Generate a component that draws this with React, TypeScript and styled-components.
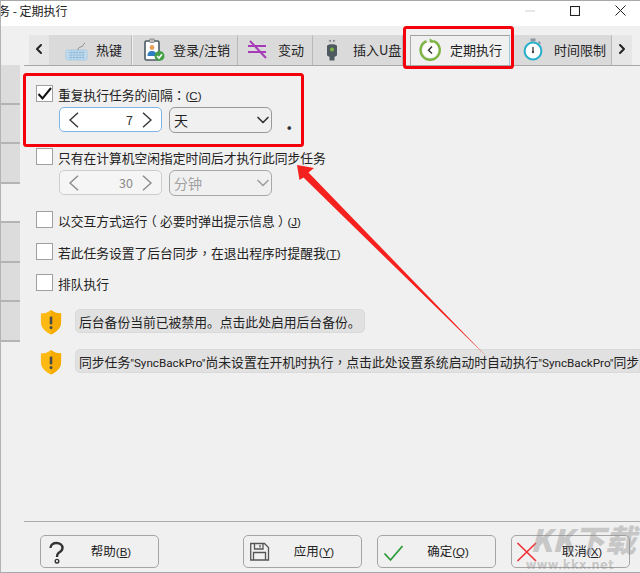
import React from "react";
import styled, { createGlobalStyle } from "styled-components";
import { ChevronLeft, ChevronRight, ChevronDown } from "lucide-react";

const Global = createGlobalStyle`
  html, body { margin: 0; padding: 0; background: #f0f0f0; }
  * { box-sizing: border-box; }
  body { font-family: "Noto Sans CJK SC", "Liberation Sans", sans-serif; color: #222; }
`;

const Window = styled.div`
  position: relative;
  width: 640px;
  height: 573px;
  overflow: hidden;
  display: flex;
  flex-direction: column;
  background: #f0f0f0;
  border-top: 1px solid #a8a8a8;
  border-left: 1px solid #b4b4b4;
  border-bottom: 1px solid #a8a8a8;
`;

const TitleBar = styled.header`
  flex: none;
  height: 25px;
  background: #fff;
  display: flex;
  align-items: center;
  justify-content: space-between;
  padding-right: 14px;
`;

const TitleText = styled.span`
  font-size: 12px;
  margin-left: -3px;
  margin-top: -6px;
  white-space: pre;
`;

const WinControls = styled.div`
  display: flex;
  align-items: center;
  gap: 35px;
  margin-top: -6px;
`;

const Body = styled.div`
  flex: 1;
  min-height: 0;
  display: flex;
`;

const SideRail = styled.aside`
  flex: none;
  width: 19px;
  padding-top: 39px;
  display: flex;
  flex-direction: column;
`;

const SideRow = styled.div<{ $blank?: boolean }>`
  height: 39.5px;
  background: ${(p) => (p.$blank ? "transparent" : "#dcdcdc")};
  border-bottom: 2px solid #b4b4b4;
`;

const Main = styled.main`
  flex: 1;
  min-width: 0;
  margin-left: 4px;
  display: flex;
  flex-direction: column;
`;

const TabStrip = styled.nav`
  flex: none;
  margin-top: 9px;
  height: 31px;
  padding-left: 5px;
  display: flex;
  border-bottom: 1px solid #a8a8a8;
`;

const ScrollBtn = styled.div<{ $right?: boolean }>`
  flex: none;
  width: ${(p) => (p.$right ? 20 : 27)}px;
  height: 30px;
  padding-right: ${(p) => (p.$right ? 0 : "7px")};
  padding-bottom: 2px;
  background: ${(p) => (p.$right ? "#e6e6e6" : "linear-gradient(90deg, #e6e6e6 20px, #dadada 20px)")};
  display: flex;
  align-items: center;
  justify-content: center;
  color: #222;
`;

const Tab = styled.div<{ $w: number; $active?: boolean; $ml?: number }>`
  flex: none;
  width: ${(p) => p.$w}px;
  height: 30px;
  margin-left: ${(p) => p.$ml ?? 0}px;
  padding: 0 0 2px 8px;
  display: flex;
  align-items: center;
  gap: 7px;
  font-size: 13px;
  white-space: nowrap;
  background: ${(p) => (p.$active ? "#f0f0f0" : "#dadada")};
  border-right: 1px solid ${(p) => (p.$active ? "#9fc6dc" : "#b8b8b8")};
  border-left: 1px solid ${(p) => (p.$active ? "#a8a8a8" : "transparent")};
  border-top: 1px solid ${(p) => (p.$active ? "#a0a0a0" : "#dadada")};
`;

const TabIcon = styled.svg`
  flex: none;
  width: 24px;
  height: 24px;
`;

const Panel = styled.section`
  flex: 1;
  min-height: 0;
  padding: 19px 0 0 12px;
  display: flex;
  flex-direction: column;
  gap: 14.5px;
`;

const Group = styled.div`
  display: flex;
  flex-direction: column;
  gap: 5px;
`;

const CheckRow = styled.label`
  height: 17px;
  display: flex;
  align-items: center;
  gap: 5px;
  font-size: 12.75px;
  white-space: nowrap;
`;

const LabelText = styled.span`
  padding-top: 2px;
`;

const Box = styled.span`
  flex: none;
  width: 17px;
  height: 17px;
  background: #fff;
  border: 1px solid #a0a0a0;
  display: flex;
  align-items: center;
  justify-content: center;
`;

const Punct = styled.span`
  font-family: "Noto Sans CJK TC", sans-serif;
`;

const Paren = styled.span<{ $dir: number }>`
  display: inline-block;
  transform: translateX(${(p) => p.$dir * 0.25}em);
`;

const Access = styled.span`
  font-family: "Liberation Sans", sans-serif;
  font-size: 11.5px;
`;

const Latin = styled.span`
  font-family: Roboto, sans-serif;
  font-size: 11.7px;
`;

const FieldRow = styled.div`
  height: 26.5px;
  margin-left: 23px;
  display: flex;
  align-items: flex-start;
  gap: 7px;
`;

const Spinner = styled.div<{ $off?: boolean }>`
  width: 103px;
  height: 25px;
  padding: 0 9px;
  display: flex;
  align-items: center;
  background: ${(p) => (p.$off ? "#f5f5f5" : "#fff")};
  border: 1px solid ${(p) => (p.$off ? "#cdcdcd" : "#7db4e6")};
  border-radius: 5px;
  color: ${(p) => (p.$off ? "#8a8a8a" : "#333")};
`;

const SpinValue = styled.span`
  flex: 1;
  text-align: right;
  padding-right: 9px;
  font-size: 12.5px;
`;

const Select = styled.div<{ $off?: boolean }>`
  width: 103px;
  height: 26px;
  padding: 0 0 0 4px;
  display: flex;
  align-items: center;
  justify-content: space-between;
  font-size: 14px;
  background: #f0f0f0;
  border: 1px solid ${(p) => (p.$off ? "#a8a8a8" : "#989898")};
  border-radius: 6px;
  color: ${(p) => (p.$off ? "#a0a0a0" : "#222")};
`;

const Caret = styled(ChevronDown)`
  margin-right: -2px;
`;

const Dot = styled.span`
  margin-left: 7px;
  margin-top: 2px;
  font-size: 20px;
  font-weight: 700;
  line-height: 26px;
  color: #333;
`;

const Notice = styled.div<{ $mt: number }>`
  display: flex;
  align-items: flex-start;
  margin-top: ${(p) => p.$mt}px;
  margin-left: 4px;
  gap: 13px;
`;

const Shield = styled.svg`
  flex: none;
  width: 22px;
  height: 26px;
`;

const Pill = styled.div<{ $wide?: boolean }>`
  height: 24px;
  padding: 0 3px 0 3px;
  display: flex;
  align-items: center;
  font-size: 12.8px;
  white-space: pre;
  background: #e1e1e1;
  border: 1px solid #dadada;
  border-radius: ${(p) => (p.$wide ? "5px 0 0 5px" : "5px")};
  ${(p) => (p.$wide ? "flex: 1; min-width: 0; overflow: hidden;" : "")}
`;

const Footer = styled.footer`
  flex: none;
  height: 51px;
  padding: 13px 10px 0 16px;
  border-top: 1px solid #ababab;
  display: flex;
  gap: 15px;
`;

const Btn = styled.button<{ $mr?: number }>`
  flex: none;
  width: 119px;
  height: 33px;
  margin-right: ${(p) => p.$mr ?? 0}px;
  padding: 0 5px 0 6px;
  display: flex;
  align-items: center;
  background: transparent;
  border: 1px solid #a5a5a5;
  border-radius: 5px;
  font-family: inherit;
  font-size: 12.5px;
  color: #222;
`;

const BtnIcon = styled.svg`
  flex: none;
  width: 22px;
  height: 24px;
  overflow: visible;
`;

const BtnLabel = styled.span`
  flex: 1;
  text-align: center;
  white-space: nowrap;
  padding-bottom: 2px;
`;

const Annotation = styled.svg`
  position: absolute;
  left: -1px;
  top: -1px;
  width: 640px;
  height: 573px;
  pointer-events: none;
`;

const Watermark = styled.div`
  position: absolute;
  right: -1px;
  top: 520px;
  width: 116px;
  display: flex;
  flex-direction: column;
  align-items: center;
  color: rgba(140, 140, 140, 0.42);
  pointer-events: none;
  white-space: nowrap;
`;

const WmLogo = styled.span`
  font-size: 31px;
  line-height: 36px;
  font-weight: 900;
  font-style: italic;
`;

const WmUrl = styled.span`
  margin-left: -26px;
  margin-top: 2px;
  font-family: "DejaVu Sans", sans-serif;
  font-size: 11.5px;
  line-height: 13px;
  font-weight: 700;
  letter-spacing: 0.4px;
`;

const ShieldIcon = () => (
  <Shield viewBox="0 0 24 26" preserveAspectRatio="none">
    <path d="M12 1 C15 3.5 19 4.5 23 4.5 V13 C23 19 18 23 12 25.5 C6 23 1 19 1 13 V4.5 C5 4.5 9 3.5 12 1 Z" fill="#fdb913" />
    <path d="M12 1 C15 3.5 19 4.5 23 4.5 V13 C23 19 18 23 12 25.5 Z" fill="#f5ab00" />
    <rect x="10.6" y="7.5" width="2.8" height="8" rx="1" fill="#4a4a4a" />
    <circle cx="12" cy="18.6" r="1.6" fill="#4a4a4a" />
  </Shield>
);

const Check = () => (
  <svg width="15" height="15" viewBox="0 0 15 15">
    <path d="M1.5 8 L5.5 12.5 L14 2" fill="none" stroke="#111" strokeWidth="2" />
  </svg>
);

const ArrowGlyph = styled.svg`
  flex: none;
`;

const SpinArrow = ({ right }: { right?: boolean }) => (
  <ArrowGlyph width="10" height="16" viewBox="0 0 10 16">
    <path d={right ? "M1 0.8 L9 8 L1 15.2" : "M9 0.8 L1 8 L9 15.2"} fill="none" stroke="currentColor" strokeWidth="1.4" />
  </ArrowGlyph>
);

export default function App() {
  return (
    <Window>
      <Global />
      <TitleBar>
        <TitleText>务 - 定期执行</TitleText>
        <WinControls>
          <svg width="10" height="2" viewBox="0 0 10 2"><path d="M0 1H10" stroke="#cfcfcf" strokeWidth="1" /></svg>
          <svg width="10" height="10" viewBox="0 0 10 10"><rect x="0.5" y="0.5" width="9" height="9" fill="none" stroke="#222" strokeWidth="1.1" /></svg>
          <svg width="11" height="11" viewBox="0 0 11 11"><path d="M0.5 0.5 L10.5 10.5 M10.5 0.5 L0.5 10.5" stroke="#222" strokeWidth="1" /></svg>
        </WinControls>
      </TitleBar>
      <Body>
        <SideRail>
          <SideRow />
          <SideRow />
          <SideRow />
          <SideRow $blank />
          <SideRow />
          <SideRow />
          <SideRow />
        </SideRail>
        <Main>
          <TabStrip>
            <ScrollBtn><ChevronLeft size={16} strokeWidth={3} /></ScrollBtn>
            <Tab $w={76}>
              <TabIcon viewBox="0 0 24 24">
                <rect x="1" y="12" width="21" height="10" rx="1.5" fill="#c4def0" stroke="#9fc6e0" strokeWidth="0.8" />
                <path d="M3 14.5H20M3 17H20M3 19.5H20M6 12.5V21.5M9 12.5V21.5M12 12.5V21.5M15 12.5V21.5M18 12.5V21.5" stroke="#8fbad8" strokeWidth="0.8" />
                <path d="M13 12 C13 9 15 9.5 17 8.5 C19 7.5 18 5.5 20 5" fill="none" stroke="#8c8c8c" strokeWidth="1" />
              </TabIcon>
              热键
            </Tab>
            <Tab $w={105} $ml={1}>
              <TabIcon viewBox="0 0 24 24">
                <rect x="3" y="3" width="14" height="19" rx="1.5" fill="#fff" stroke="#4d5a62" strokeWidth="1.6" />
                <rect x="7.5" y="1" width="5" height="3.5" rx="1" fill="#bdbdbd" stroke="#6a6a6a" strokeWidth="0.6" />
                <circle cx="10" cy="9.5" r="2.4" fill="#e8a15c" />
                <path d="M5.5 18 C5.5 14 7.5 13 10 13 C12.5 13 14.5 14 14.5 18 Z" fill="#2f7fc1" />
                <circle cx="17.5" cy="18" r="5" fill="#43a047" />
                <path d="M15 18 L17 20 L20 16.2" fill="none" stroke="#fff" strokeWidth="1.5" />
              </TabIcon>
              登录/注销
            </Tab>
            <Tab $w={75}>
              <TabIcon viewBox="0 0 24 24">
                <path d="M1 8H19M1 14H19M3 3L19 20" fill="none" stroke="#a63bb8" strokeWidth="2" />
              </TabIcon>
              变动
            </Tab>
            <Tab $w={90}>
              <TabIcon viewBox="0 0 24 24">
                <rect x="6" y="1" width="8" height="4" fill="#d5d5d5" />
                <rect x="7.3" y="2" width="1.6" height="1.6" fill="#777" />
                <rect x="11" y="2" width="1.6" height="1.6" fill="#777" />
                <path d="M5 8 C5 5.5 15 5.5 15 8 V17 C15 18 13 18.5 12.5 19 V22.5 H7.5 V19 C7 18.5 5 18 5 17 Z" fill="#4f5a60" />
                <circle cx="10" cy="11.5" r="2" fill="#7cb342" />
              </TabIcon>
              插入U盘
            </Tab>
            <Tab $w={100} $ml={7} $active>
              <TabIcon viewBox="0 0 24 24">
                <path d="M14.8 3.2 A9.6 9.6 0 1 1 7.5 3.2" fill="none" stroke="#7cb342" strokeWidth="2.4" />
                <path d="M10.5 0.5 L16 3.2 L11 6.5 Z" fill="#7cb342" />
                <circle cx="11.5" cy="12" r="7.6" fill="#fff" />
                <path d="M13 8.5 L9.5 12.3 L13 15.5" fill="none" stroke="#333" strokeWidth="1.4" />
              </TabIcon>
              定期执行
            </Tab>
            <Tab $w={98} $ml={4}>
              <TabIcon viewBox="0 0 24 24">
                <rect x="7.5" y="0.5" width="5" height="3" fill="#8a96a0" />
                <path d="M15.5 3.6 L17.5 5.6" stroke="#8a96a0" strokeWidth="1.6" />
                <circle cx="10" cy="13" r="8.4" fill="#fff" stroke="#26afc9" strokeWidth="2" />
                <path d="M10 9 V13.5" stroke="#444" strokeWidth="1.4" />
                <circle cx="10" cy="14" r="1.2" fill="#444" />
              </TabIcon>
              时间限制
            </Tab>
            <ScrollBtn $right><ChevronRight size={16} strokeWidth={3} /></ScrollBtn>
          </TabStrip>
          <Panel>
            <Group>
              <CheckRow>
                <Box><Check /></Box>
                <LabelText>重复执行任务的间隔<Punct>：</Punct><Access>(<u>C</u>)</Access></LabelText>
              </CheckRow>
              <FieldRow>
                <Spinner>
                  <SpinArrow />
                  <SpinValue>7</SpinValue>
                  <SpinArrow right />
                </Spinner>
                <Select>
                  天
                  <Caret size={20} strokeWidth={2} color="#333" />
                </Select>
                <Dot>.</Dot>
              </FieldRow>
            </Group>
            <Group>
              <CheckRow>
                <Box />
                <LabelText>只有在计算机空闲指定时间后才执行此同步任务</LabelText>
              </CheckRow>
              <FieldRow>
                <Spinner $off>
                  <SpinArrow />
                  <SpinValue>30</SpinValue>
                  <SpinArrow right />
                </Spinner>
                <Select $off>
                  分钟
                  <Caret size={20} strokeWidth={2} color="#a0a0a0" />
                </Select>
              </FieldRow>
            </Group>
            <CheckRow>
              <Box />
              <LabelText>以交互方式运行<Paren $dir={-1}>（</Paren>必要时弹出提示信息<Paren $dir={1}>）</Paren><Access>(<u>J</u>)</Access></LabelText>
            </CheckRow>
            <CheckRow>
              <Box />
              <LabelText>若此任务设置了后台同步<Punct>，</Punct>在退出程序时提醒我<Access>(<u>T</u>)</Access></LabelText>
            </CheckRow>
            <CheckRow>
              <Box />
              <LabelText>排队执行</LabelText>
            </CheckRow>
            <Notice $mt={3.5}>
              <ShieldIcon />
              <Pill>后台备份当前已被禁用。点击此处启用后台备份。</Pill>
            </Notice>
            <Notice $mt={-0.5}>
              <ShieldIcon />
              <Pill $wide>
                <span>同步任务<Latin>"SyncBackPro"</Latin>尚未设置在开机时执行<Punct>，</Punct>点击此处设置系统启动时自动执行<Latin>"SyncBackPro"</Latin>同步任务</span>
              </Pill>
            </Notice>
          </Panel>
          <Footer>
            <Btn $mr={69}>
              <BtnIcon viewBox="0 0 22 24">
                <path d="M3.5 8 C3.5 4.5 6.5 3 9.5 3 C13 3 15.5 5 15.5 8 C15.5 11 13 12 11.5 13 C10.3 13.8 10 14.5 10 17" fill="none" stroke="#333" strokeWidth="2.4" />
                <circle cx="10" cy="21.2" r="1.8" fill="none" stroke="#333" strokeWidth="1.4" />
              </BtnIcon>
              <BtnLabel>帮助<Access>(<u>B</u>)</Access></BtnLabel>
            </Btn>
            <Btn>
              <BtnIcon viewBox="0 0 22 24">
                <path d="M0.7 3.5 H14.5 L18.5 7.5 V20 H0.7 Z" fill="none" stroke="#555" strokeWidth="1.3" />
                <path d="M4.5 3.5 V9 H13 V3.5 M10 5 V7.5 M3.5 20 V12.5 H15.5 V20" fill="none" stroke="#555" strokeWidth="1.3" />
              </BtnIcon>
              <BtnLabel>应用<Access>(<u>Y</u>)</Access></BtnLabel>
            </Btn>
            <Btn>
              <BtnIcon viewBox="0 0 22 24">
                <path d="M0.5 13.5 L6.5 20 L18.5 6" fill="none" stroke="#2e9b3a" strokeWidth="1.8" />
              </BtnIcon>
              <BtnLabel>确定<Access>(<u>Q</u>)</Access></BtnLabel>
            </Btn>
            <Btn>
              <BtnIcon viewBox="0 0 22 24">
                <path d="M-0.5 3 L18 21 M18 3 L-0.5 21" fill="none" stroke="#f0323c" strokeWidth="1.7" />
              </BtnIcon>
              <BtnLabel>取消<Access>(<u>X</u>)</Access></BtnLabel>
            </Btn>
          </Footer>
        </Main>
      </Body>
      <Annotation viewBox="0 0 640 573">
        <rect x="24.5" y="74.5" width="278" height="71" rx="2" fill="none" stroke="#f5000a" strokeWidth="3" />
        <rect x="404.5" y="27.5" width="108" height="40" rx="2" fill="none" stroke="#f5000a" strokeWidth="3" />
        <path d="M297 165 L314 168 L308.5 172.5 L487 357 L303.5 177.5 L299.5 180 Z" fill="#f5211e" />
      </Annotation>
      <Watermark>
        <WmLogo>KK下载</WmLogo>
        <WmUrl>www.kkx.net</WmUrl>
      </Watermark>
    </Window>
  );
}
